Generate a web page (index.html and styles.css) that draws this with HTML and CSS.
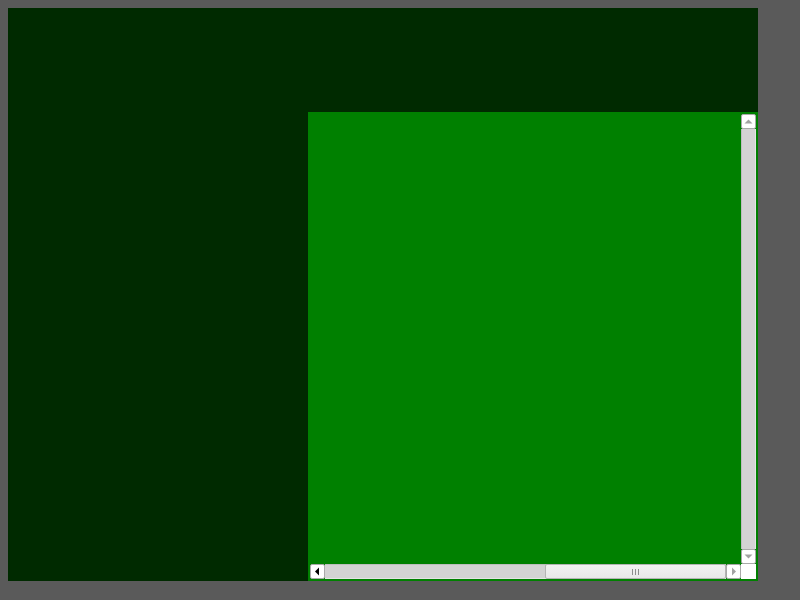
FILE: index.html
```html
<!DOCTYPE html>
<html lang="en">
<head>
<meta charset="utf-8">
<title>Scroll pane</title>
<link rel="stylesheet" href="styles.css">
</head>
<body>
<div class="stage">
  <div class="pane">
    <div class="pane-view"></div>
    <div class="vbar">
      <div class="sb-btn"><svg viewBox="0 0 15 15" width="15" height="15"><polygon class="arrow-off" points="3.5,9.5 7.5,5.5 11.5,9.5"/></svg></div>
      <div class="vtrack"></div>
      <div class="sb-btn"><svg viewBox="0 0 15 15" width="15" height="15"><polygon class="arrow-off" points="3.5,5.5 11.5,5.5 7.5,9.5"/></svg></div>
    </div>
    <div class="hbar">
      <div class="sb-btn"><svg viewBox="0 0 15 15" width="15" height="15"><polygon class="arrow-on" points="5,7.5 9,3.5 9,11.5"/></svg></div>
      <div class="htrack">
        <div class="hthumb"><span class="grip"></span><span class="grip"></span><span class="grip"></span></div>
      </div>
      <div class="sb-btn"><svg viewBox="0 0 15 15" width="15" height="15"><polygon class="arrow-off" points="6,3.5 10,7.5 6,11.5"/></svg></div>
    </div>
    <div class="corner"></div>
  </div>
</div>
</body>
</html>
```

FILE: styles.css
```css
html, body {
  background: #5a5a5a;
}
body {
  margin: 8px;
}
.stage {
  width: 750px;
  height: 573px;
  background: #002a00;
  display: flex;
  justify-content: flex-end;
  align-items: flex-end;
}
.pane {
  box-sizing: border-box;
  width: 450px;
  height: 469px;
  border: 2px solid #008000;
  background: #008000;
  display: grid;
  grid-template-columns: 1fr 15px;
  grid-template-rows: 1fr 15px;
}
.pane-view {
  background: #008000;
}
.vbar {
  display: flex;
  flex-direction: column;
}
.hbar {
  display: flex;
  flex-direction: row;
}
.sb-btn {
  box-sizing: border-box;
  width: 15px;
  height: 15px;
  flex: none;
  background: #ffffff;
  border: 1px solid #a9a9a9;
  border-radius: 2px;
  display: flex;
  align-items: center;
  justify-content: center;
}
.sb-btn svg {
  display: block;
  flex: none;
  margin: -1px;
}
.arrow-off {
  fill: #a3a3a3;
}
.arrow-on {
  fill: #000000;
}
.vtrack {
  flex: 1;
  background: #d3d3d3;
  border-left: 1px solid #bdbdbd;
  border-right: 1px solid #e4e4e4;
}
.htrack {
  flex: 1;
  background: #d3d3d3;
  border-top: 1px solid #bdbdbd;
  border-bottom: 1px solid #e4e4e4;
  display: flex;
  justify-content: flex-end;
}
.hthumb {
  box-sizing: border-box;
  width: 181px;
  margin-top: -1px;
  margin-bottom: -1px;
  background: linear-gradient(#f2f2f2, #e8e8e8);
  border: 1px solid #b4b4b4;
  border-radius: 2px;
  display: flex;
  align-items: center;
  justify-content: center;
  gap: 2px;
}
.grip {
  width: 1px;
  height: 6px;
  background: #8c8c8c;
}
.corner {
  background: #ffffff;
}
```
